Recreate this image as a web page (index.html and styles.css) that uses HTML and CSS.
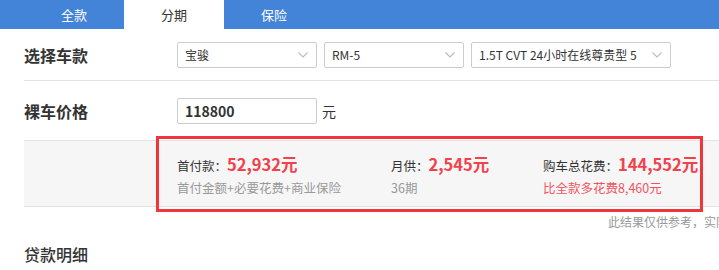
FILE: index.html
```html
<!DOCTYPE html>
<html lang="zh">
<head>
<meta charset="utf-8">
<link rel="stylesheet" href="styles.css">
</head>
<body>
<div class="tabs">
  <div class="tab">全款</div>
  <div class="tab active">分期</div>
  <div class="tab">保险</div>
</div>
<div class="page">
  <div class="row row-select">
    <div class="label">选择车款</div>
    <div class="selects">
      <div class="select s1"><span>宝骏</span><svg class="arrow" viewBox="0 0 10 6" width="10" height="6"><path d="M0.5 0.5 L5 5 L9.5 0.5" fill="none" stroke="#bbb" stroke-width="1.1"/></svg></div>
      <div class="select s2"><span>RM-5</span><svg class="arrow" viewBox="0 0 10 6" width="10" height="6"><path d="M0.5 0.5 L5 5 L9.5 0.5" fill="none" stroke="#bbb" stroke-width="1.1"/></svg></div>
      <div class="select s3"><span>1.5T CVT 24小时在线尊贵型 5</span><svg class="arrow" viewBox="0 0 10 6" width="10" height="6"><path d="M0.5 0.5 L5 5 L9.5 0.5" fill="none" stroke="#bbb" stroke-width="1.1"/></svg></div>
    </div>
  </div>
  <div class="row row-price">
    <div class="label">裸车价格</div>
    <div class="input">118800</div>
    <span class="unit">元</span>
  </div>
  <div class="result">
    <div class="highlight"></div>
    <div class="item i1">
      <div class="main"><span class="k">首付款：</span><span class="v">52,932元</span></div>
      <div class="sub">首付金额+必要花费+商业保险</div>
    </div>
    <div class="item i2">
      <div class="main"><span class="k">月供：</span><span class="v">2,545元</span></div>
      <div class="sub">36期</div>
    </div>
    <div class="item i3">
      <div class="main"><span class="k">购车总花费：</span><span class="v">144,552元</span></div>
      <div class="sub red">比全款多花费8,460元</div>
    </div>
  </div>
  <div class="note">此结果仅供参考，实际以店内报价为准</div>
  <div class="detail">贷款明细</div>
</div>
</body>
</html>
```
FILE: styles.css
```css
html, body {
  margin: 0;
  padding: 0;
  background: #fff;
  overflow: hidden;
  width: 719px;
  height: 270px;
}
body {
  font-family: "Microsoft YaHei", "Noto Sans CJK SC", "Noto Sans", sans-serif;
  color: #333;
}
.tabs {
  display: flex;
  height: 29px;
  background: #4384d9;
  padding-left: 24px;
}
.tab {
  width: 100px;
  text-align: center;
  line-height: 29px;
  font-size: 13px;
  color: #fff;
}
.tab.active {
  background: #fff;
  color: #333;
}
.page {
  padding-left: 24px;
  position: relative;
}
.row {
  display: flex;
  align-items: center;
}
.label {
  width: 153px;
  font-size: 16px;
  font-weight: bold;
  color: #333;
}
.row-select {
  height: 51px;
  border-bottom: 1px solid #e3e3e3;
}
.selects {
  display: flex;
  gap: 7px;
}
.select {
  box-sizing: border-box;
  height: 26px;
  border: 1px solid #ccc;
  border-radius: 2px;
  display: flex;
  align-items: center;
  justify-content: space-between;
  padding: 0 8px 0 7px;
  font-size: 12px;
  color: #333;
  white-space: nowrap;
}
.s1 { width: 140px; }
.s2 { width: 140px; }
.s3 { width: 200px; }
.arrow { flex: none; }
.row-price {
  height: 59px;
}
.input {
  box-sizing: border-box;
  width: 140px;
  height: 26px;
  border: 1px solid #ccc;
  border-radius: 2px;
  padding-left: 7px;
  font-size: 14px;
  font-weight: bold;
  line-height: 24px;
  color: #333;
}
.unit {
  margin-left: 5px;
  font-size: 14px;
  color: #333;
}
.result {
  position: relative;
  height: 54px;
  background: #f6f6f6;
  border-top: 1px solid #e3e3e3;
  border-bottom: 1px solid #e3e3e3;
  display: flex;
  padding-left: 153px;
  padding-top: 11px;
}
.highlight {
  position: absolute;
  left: 132px;
  top: -5px;
  width: 541px;
  height: 70px;
  border: 3px solid #f2353b;
}
.item {
  display: flex;
  flex-direction: column;
}
.i1 { width: 214px; }
.i2 { width: 152px; }
.main {
  display: flex;
  align-items: baseline;
  height: 22px;
}
.k {
  font-size: 12.5px;
  color: #333;
}
.v {
  font-size: 16.5px;
  font-weight: bold;
  color: #f2414b;
}
.sub {
  margin-top: 4px;
  font-size: 12.5px;
  color: #999;
}
.sub.red {
  color: #f2535e;
}
.note {
  margin-top: 6px;
  padding-left: 584px;
  font-size: 12px;
  color: #999;
  white-space: nowrap;
}
.detail {
  margin-top: 12px;
  font-size: 16px;
  color: #333;
  font-weight: 500;
}
```
